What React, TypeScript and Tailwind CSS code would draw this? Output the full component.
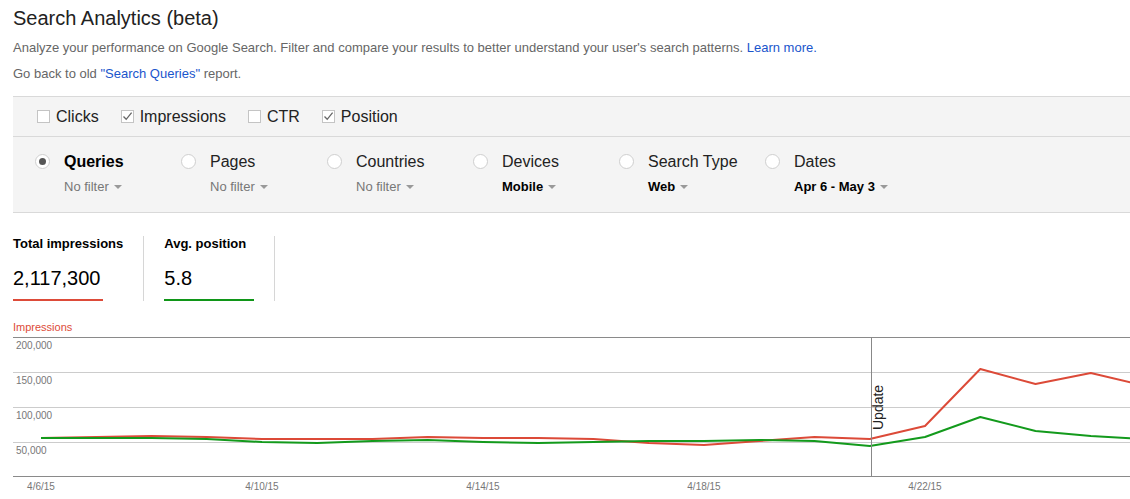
import React from "react";

const FONT = { fontFamily: '"Liberation Sans", Arial, sans-serif' };

const metricsChecks = [
  { label: "Clicks", checked: false },
  { label: "Impressions", checked: true },
  { label: "CTR", checked: false },
  { label: "Position", checked: true },
];

const groups = [
  { label: "Queries", sub: "No filter", active: true, bold: false },
  { label: "Pages", sub: "No filter", active: false, bold: false },
  { label: "Countries", sub: "No filter", active: false, bold: false },
  { label: "Devices", sub: "Mobile", active: false, bold: true },
  { label: "Search Type", sub: "Web", active: false, bold: true },
  { label: "Dates", sub: "Apr 6 - May 3", active: false, bold: true },
];

// page-space y values per day (4/6 .. 4/26), converted to svg space below
const redY = [438, 437, 436, 437, 439, 439, 439, 437, 438, 438, 439, 443, 445, 441, 437, 439, 426, 369, 384, 373, 386];
const greenY = [438, 438, 438, 439, 442, 443, 441, 440, 442, 443, 442, 441, 441, 440, 441, 446, 437, 417, 431, 436, 439];

const dayX = (i: number) => 41 + 55.25 * i - 13;
const toPoints = (ys: number[]) => ys.map((y, i) => `${dayX(i).toFixed(1)},${y - 337}`).join(" ");

function Caret() {
  return (
    <svg width="8" height="5" viewBox="0 0 8 5" className="ml-[5px] mt-[1px]">
      <path d="M0 0 L8 0 L4 4 Z" fill="#999" />
    </svg>
  );
}

function Checkbox({ checked }: { checked: boolean }) {
  return (
    <span className="flex h-[13px] w-[13px] items-center justify-center border border-[#c4c4c4] bg-white">
      {checked && (
        <svg width="11" height="11" viewBox="0 0 11 11">
          <path d="M1.5 5.5 L4.2 8.3 L9.6 1.6" fill="none" stroke="#666" strokeWidth="1.3" />
        </svg>
      )}
    </span>
  );
}

function Chart() {
  const grid = [
    { y: 0.5, label: "200,000", dark: true },
    { y: 35.5, label: "150,000", dark: false },
    { y: 70.5, label: "100,000", dark: false },
    { y: 105.5, label: "50,000", dark: false },
  ];
  const xLabels = ["4/6/15", "4/10/15", "4/14/15", "4/18/15", "4/22/15"];
  return (
    <svg width="1117" height="160" className="block" style={FONT}>
      {grid.map((g) => (
        <g key={g.label}>
          <line x1="0" x2="1117" y1={g.y} y2={g.y} stroke={g.dark ? "#8a8a8a" : "#cccccc"} />
          <text x="3" y={g.y + 11} fontSize="10" fill="#777">
            {g.label}
          </text>
        </g>
      ))}
      <line x1="0" x2="1117" y1="139.5" y2="139.5" stroke="#8a8a8a" />
      {xLabels.map((l, i) => (
        <text key={l} x={dayX(i * 4)} y="153" fontSize="10" fill="#777" textAnchor="middle">
          {l}
        </text>
      ))}
      <polyline points={toPoints(redY)} fill="none" stroke="#dc4a38" strokeWidth="2" strokeLinejoin="round" />
      <polyline points={toPoints(greenY)} fill="none" stroke="#139a1c" strokeWidth="2" strokeLinejoin="round" />
      <line x1="858.5" x2="858.5" y1="0" y2="139" stroke="#888" />
      <text x="870" y="93" fontSize="14" fill="#222" transform="rotate(-90 870 93)">
        Update
      </text>
    </svg>
  );
}

export default function App() {
  return (
    <div className="min-h-[499px] w-[1130px] overflow-hidden bg-white pl-[13px] text-[#222]" style={FONT}>
      <h1 className="mt-[6px] text-[20px] leading-[24px] text-[#222]">Search Analytics (beta)</h1>
      <p className="mt-[10px] text-[13px] leading-[16px] text-[#666]">
        Analyze your performance on Google Search. Filter and compare your results to better understand your user's
        search patterns. <a className="text-[#1a55cc]">Learn more.</a>
      </p>
      <p className="mt-[10px] text-[13px] leading-[16px] text-[#666]">
        Go back to old <a className="text-[#1a55cc]">"Search Queries"</a> report.
      </p>

      <div className="mt-[14px] border-y border-[#d9d9d9] bg-[#f4f4f4]">
        <div className="flex h-[40px] items-center gap-[22px] border-b border-[#d9d9d9] pl-[24px]">
          {metricsChecks.map((c) => (
            <label key={c.label} className="flex items-center gap-[6px] text-[16px] leading-[18px] text-[#222]">
              <Checkbox checked={c.checked} />
              {c.label}
            </label>
          ))}
        </div>
        <div className="flex pb-[17px] pl-[22px] pt-[16px]">
          {groups.map((g) => (
            <div key={g.label} className="flex w-[146px] gap-[14px]">
              <span className="mt-[1px] flex h-[15px] w-[15px] shrink-0 items-center justify-center rounded-full border border-[#cfcfcf] bg-white">
                {g.active && <span className="h-[7px] w-[7px] rounded-full bg-[#555]" />}
              </span>
              <div>
                <div className={`text-[16px] leading-[18px] ${g.active ? "font-bold text-black" : "text-[#222]"}`}>
                  {g.label}
                </div>
                <div
                  className={`mt-[8px] flex items-center text-[13px] leading-[16px] ${
                    g.bold ? "font-bold text-black" : "text-[#777]"
                  }`}
                >
                  {g.sub}
                  <Caret />
                </div>
              </div>
            </div>
          ))}
        </div>
      </div>

      <div className="mt-[23px] flex">
        <div className="min-w-[90px] border-r border-[#d6d6d6] pr-[20px]">
          <div className="text-[13px] font-bold leading-[16px] text-black">Total impressions</div>
          <div className="mt-[14px] text-[20px] leading-[24px] text-black">2,117,300</div>
          <div className="mt-[9px] h-[2px] w-[90px] bg-[#dd4b39]" />
        </div>
        <div className="min-w-[110px] border-r border-[#d6d6d6] pl-[20px] pr-[20px]">
          <div className="text-[13px] font-bold leading-[16px] text-black">Avg. position</div>
          <div className="mt-[14px] text-[20px] leading-[24px] text-black">5.8</div>
          <div className="mt-[9px] h-[2px] w-[90px] bg-[#109618]" />
        </div>
      </div>

      <div className="mt-[20px] text-[11px] leading-[13px] text-[#dd4b39]">Impressions</div>
      <div className="mt-[3px]">
        <Chart />
      </div>
    </div>
  );
}
